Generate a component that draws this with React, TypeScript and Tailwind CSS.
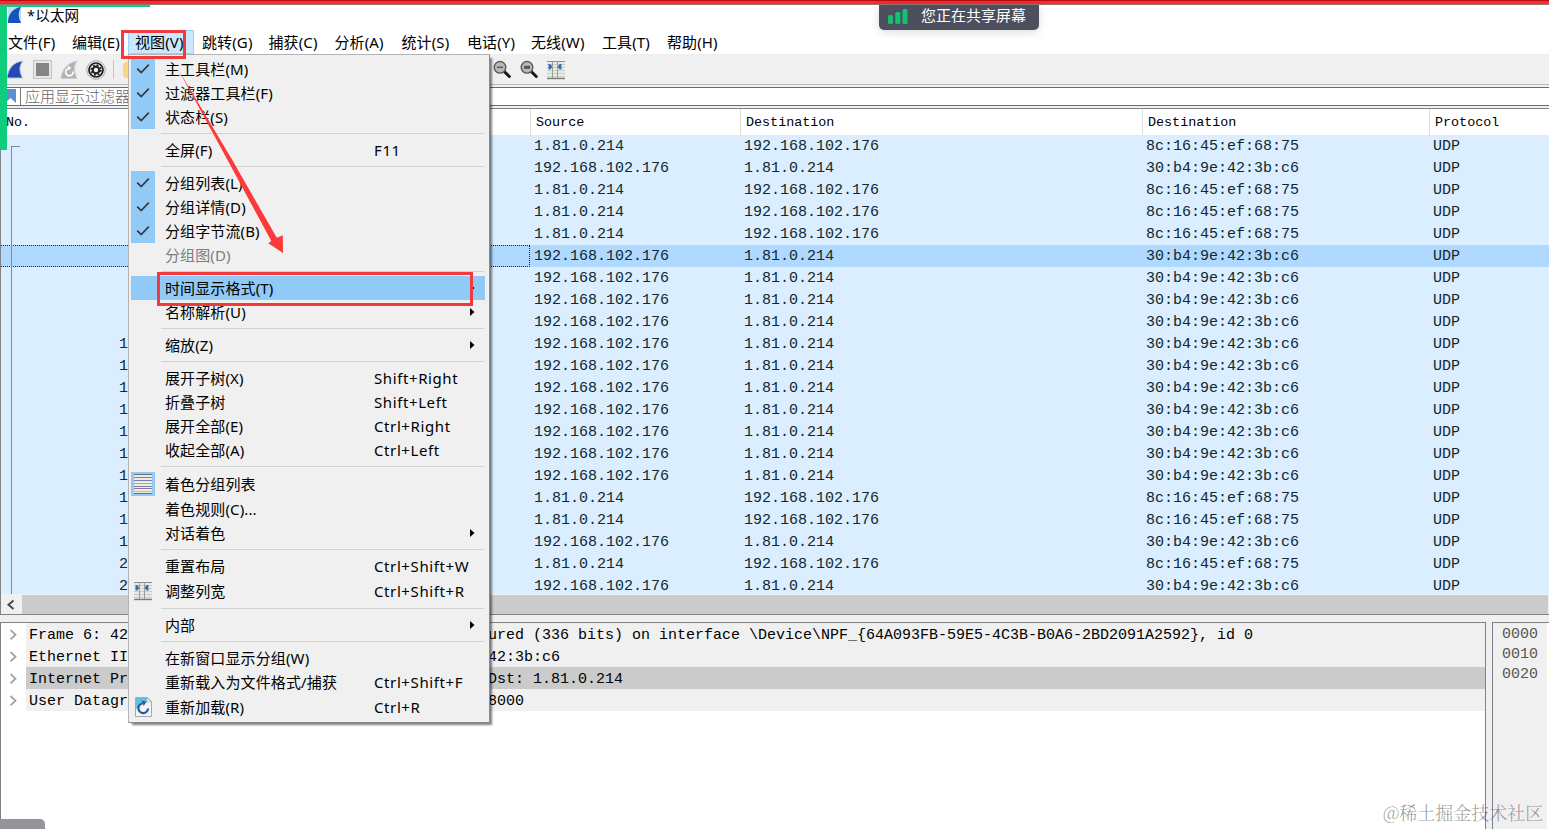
import React from "react";

const UI = "font-['Noto_Sans','Noto_Sans_CJK_SC',sans-serif]";
const MONO = "font-['Liberation_Mono','Noto_Sans_CJK_SC',monospace]";

const A = "1.81.0.214";
const B = "192.168.102.176";
const OUT = [A, B, "8c:16:45:ef:68:75"];
const IN = [B, A, "30:b4:9e:42:3b:c6"];
const directions = "oioooiiiiiiiiiiiooioi";
const packets = directions.split("").map((d) => (d === "o" ? OUT : IN));

const menus = [
  { label: "文件(F)", w: "w-[64px]" },
  { label: "编辑(E)", w: "w-[63px]" },
  { label: "视图(V)", w: "w-[67px]" },
  { label: "跳转(G)", w: "w-[66.5px]" },
  { label: "捕获(C)", w: "w-[66px]" },
  { label: "分析(A)", w: "w-[67px]" },
  { label: "统计(S)", w: "w-[65.5px]" },
  { label: "电话(Y)", w: "w-[64px]" },
  { label: "无线(W)", w: "w-[71px]" },
  { label: "工具(T)", w: "w-[65px]" },
  { label: "帮助(H)", w: "w-[65px]" },
];

type Item = {
  label: string;
  keys?: string;
  icon?: "check" | "color" | "columns" | "reload";
  sub?: boolean;
  disabled?: boolean;
  active?: boolean;
  h?: string;
};

const groups: Item[][] = [
  [
    { label: "主工具栏(M)", icon: "check" },
    { label: "过滤器工具栏(F)", icon: "check" },
    { label: "状态栏(S)", icon: "check" },
  ],
  [{ label: "全屏(F)", keys: "F11" }],
  [
    { label: "分组列表(L)", icon: "check" },
    { label: "分组详情(D)", icon: "check" },
    { label: "分组字节流(B)", icon: "check" },
    { label: "分组图(D)", disabled: true },
  ],
  [
    { label: "时间显示格式(T)", sub: true, active: true },
    { label: "名称解析(U)", sub: true },
  ],
  [{ label: "缩放(Z)", sub: true }],
  [
    { label: "展开子树(X)", keys: "Shift+Right" },
    { label: "折叠子树", keys: "Shift+Left" },
    { label: "展开全部(E)", keys: "Ctrl+Right" },
    { label: "收起全部(A)", keys: "Ctrl+Left" },
  ],
  [
    { label: "着色分组列表", icon: "color", h: "h-[26px]" },
    { label: "着色规则(C)..." },
    { label: "对话着色", sub: true },
  ],
  [
    { label: "重置布局", keys: "Ctrl+Shift+W" },
    { label: "调整列宽", keys: "Ctrl+Shift+R", icon: "columns", h: "h-[26px]" },
  ],
  [{ label: "内部", sub: true }],
  [
    { label: "在新窗口显示分组(W)" },
    { label: "重新载入为文件格式/捕获", keys: "Ctrl+Shift+F" },
    { label: "重新加载(R)", keys: "Ctrl+R", icon: "reload", h: "h-[26px]" },
  ],
];

// Each line is split where the open menu covers it.
const details = [
  ["Frame 6: 42", "ured (336 bits) on interface \\Device\\NPF_{64A093FB-59E5-4C3B-B0A6-2BD2091A2592}, id 0"],
  ["Ethernet II", "42:3b:c6"],
  ["Internet Pr", "Dst: 1.81.0.214"],
  ["User Datagr", "8000"],
];

function ColumnsIcon() {
  return (
    <svg width="18" height="20" viewBox="0 0 18 20" className="shrink-0">
      <rect x="0" y="1" width="18" height="18" fill="#e9ebe4" />
      <path d="M0 4.5h18M0 7.5h18M0 10.5h18M0 13.5h18M0 16.5h18" stroke="#c9cdc5" />
      <path d="M0 1.5h18" stroke="#8c8e8a" />
      <path d="M0 18.5h18" stroke="#777975" strokeWidth="1.4" />
      <path d="M5.5 1v17M10.5 1v17" stroke="#9a9d98" />
      <path d="M1.5 4v5.5h1.8L5 7.5V6L3.3 4zM14.5 4v5.5h-1.8L11 7.5V6l1.7-2z" fill="#3a6fae" />
    </svg>
  );
}

function ZoomIcon({ lines }: { lines: number }) {
  return (
    <svg width="19" height="19" viewBox="0 0 19 19">
      <path d="M11.5 11.7l4.8 4.8" stroke="#181818" strokeWidth="3" strokeLinecap="round" />
      <circle cx="7" cy="7.3" r="5.8" fill="#b9bab8" stroke="#5a5c5a" strokeWidth="1.4" />
      {lines === 1 ? (
        <path d="M4 7.3h6" stroke="#555" strokeWidth="1.5" />
      ) : (
        <path d="M4 7.3h6" stroke="#555" strokeWidth="3" />
      )}
    </svg>
  );
}

function ItemIcon({ kind }: { kind?: Item["icon"] }) {
  if (kind === "check")
    return (
      <div className="flex h-full w-6 items-center justify-center bg-[#91c9f7]">
        <svg width="14" height="12" viewBox="0 0 14 12">
          <path d="M1.2 5.6l4 4L12.8 1.6" fill="none" stroke="#2c3a48" strokeWidth="1.6" />
        </svg>
      </div>
    );
  if (kind === "color")
    return (
      <div className="flex h-6 w-6 items-center justify-center bg-[#91c9f7]">
        <svg width="18" height="20" viewBox="0 0 18 20">
          <rect width="18" height="20" fill="#eceee6" />
          <path d="M0 .5h18M0 19.5h18" stroke="#6b7074" />
          <path d="M0 3.5h18" stroke="#e0605c" />
          <path d="M0 6.5h18" stroke="#7181ae" />
          <path d="M0 9.5h18" stroke="#78cf47" />
          <path d="M0 12.5h18" stroke="#7181ae" />
          <path d="M0 14.5h18" stroke="#9b7096" />
          <path d="M0 17.5h18" stroke="#e4c04c" />
        </svg>
      </div>
    );
  if (kind === "columns")
    return (
      <div className="flex w-6 justify-center">
        <ColumnsIcon />
      </div>
    );
  if (kind === "reload")
    return (
      <div className="flex w-6 justify-center">
        <svg width="17" height="20" viewBox="0 0 17 20">
          <path d="M.5 .5h12l4 4v15H.5z" fill="#f1f3f4" stroke="#a6aaac" />
          <path d="M1 1h11l1 4-5 1-7 6z" fill="#62bfe6" />
          <path d="M12 1l4 4h-4z" fill="#fff" stroke="#a6aaac" strokeWidth=".6" />
          <path d="M13 11.5a4.8 4.8 0 1 1-5.5-5" fill="none" stroke="#2d5590" strokeWidth="2.2" />
          <path d="M6.5 3.6l4.8 1.2-2.6 4.2z" fill="#2d5590" />
        </svg>
      </div>
    );
  return <div className="w-6" />;
}

function MenuItem({ item }: { item: Item }) {
  return (
    <div
      className={`mr-[2px] flex items-center ${item.h ?? "h-6"} ${item.active ? "bg-[#91c9f7]" : ""} ${
        item.disabled ? "text-[#7d7d7d]" : "text-black"
      }`}
    >
      <ItemIcon kind={item.icon} />
      <span className="ml-[10px] w-[209px] whitespace-nowrap tracking-[0.12px]">{item.label}</span>
      <span className="w-[96px] shrink-0 whitespace-nowrap tracking-[0.6px]">{item.keys}</span>
      {item.sub && (
        <svg width="5" height="8" viewBox="0 0 5 8" className="shrink-0">
          <path d="M0 0l4.5 4L0 8z" fill="#000" />
        </svg>
      )}
    </div>
  );
}

function ViewMenu() {
  return (
    <div
      className={`absolute left-[128px] top-[54px] h-[669px] w-[362px] border border-[#b4b4b4] border-r-[#8c8c8c] border-b-[#8c8c8c] bg-[#f0f0f0] px-[2px] pt-[2px] text-[15px] leading-6 shadow-[3px_3px_2px_-1px_rgba(0,0,0,0.5)] ${UI}`}
    >
      {groups.map((g, i) => (
        <React.Fragment key={i}>
          {i > 0 && <div className="mb-[4px] ml-[30px] mr-[3px] mt-[4px] h-px bg-[#d2d2d2]" />}
          {g.map((item) => (
            <MenuItem key={item.label} item={item} />
          ))}
        </React.Fragment>
      ))}
    </div>
  );
}

function Toolbar() {
  return (
    <div className="flex h-[30px] shrink-0 items-center border-b border-[#b9b9b9] bg-[#f0f0f0] pl-[7px]">
      <svg width="17" height="19" viewBox="0 0 17 19">
        <path d="M0 18C1 9 6 2 16 1c-4 5-4 10-.5 17z" fill="#2448b8" stroke="#b9c1d4" />
      </svg>
      <svg width="19" height="19" viewBox="0 0 19 19" className="ml-[9px]">
        <rect x=".5" y=".5" width="18" height="18" fill="#e6e6e6" stroke="#c4c4c4" />
        <rect x="3" y="3" width="13" height="13" fill="#858585" />
      </svg>
      <svg width="19" height="20" viewBox="0 0 19 20" className="ml-[8px]">
        <path d="M1 18.5C2 10 7 3 17 1c-4 5-3 11 0 17.5z" fill="#b3b3b3" stroke="#c9c9c9" />
        <path d="M13 11.5a3.7 3.7 0 1 1-4.6-3" fill="none" stroke="#fff" strokeWidth="1.8" />
        <path d="M7.5 5.5l3.8 2.3-3 2.8z" fill="#fff" />
      </svg>
      <svg width="20" height="20" viewBox="0 0 20 20" className="ml-[7px]">
        <circle cx="10" cy="10" r="9.3" fill="#e8e8e8" stroke="#aaa" />
        <circle cx="10" cy="10" r="7" fill="#eee" stroke="#222" strokeWidth="1.7" />
        <circle cx="10" cy="10" r="3.3" fill="none" stroke="#222" strokeWidth="2.2" />
        <circle cx="10" cy="10" r="4.9" fill="none" stroke="#222" strokeWidth="1.6" strokeDasharray="1.9 1.95" />
      </svg>
      <div className="ml-[7px] h-[19px] w-px bg-[#c6c6c6]" />
      <div className="ml-[9px] h-4 w-5 rounded-sm bg-[#f8d780]" />
      <div className="ml-[350px] flex items-center gap-2">
        <ZoomIcon lines={1} />
        <ZoomIcon lines={2} />
        <ColumnsIcon />
      </div>
    </div>
  );
}

function PacketList() {
  const grid = "grid grid-cols-[530px_210px_402px_287px_1fr]";
  return (
    <div className="relative flex h-[507px] shrink-0 flex-col border-b border-l border-t border-[#7f8387] bg-white">
      <div className={`${grid} h-[26px] shrink-0 text-[13.4px] leading-[28px] ${MONO}`}>
        <div className="border-r border-[#dedede] pl-[5px]">No.</div>
        {["Source", "Destination", "Destination", "Protocol"].map((h, i) => (
          <div key={i} className={`pl-[5px] ${i < 3 ? "border-r border-[#dedede]" : ""}`}>
            {h}
          </div>
        ))}
      </div>
      <div className="h-[459px] shrink-0 overflow-hidden bg-[#daeeff]">
        {packets.map((p, i) => (
          <div
            key={i}
            className={`${grid} h-[22px] text-[15px] leading-[24px] text-[#12272e] ${MONO} ${i === 5 ? "bg-[#afd9ff]" : ""}`}
          >
            <div
              className={`pl-[100px] ${i === 5 ? "mr-px border border-l-0 border-dotted border-[#12272e] leading-[20px]" : ""}`}
            >
              <div className="w-9 text-right">{i + 1}</div>
            </div>
            {[...p, "UDP"].map((c, j) => (
              <div key={j} className="h-[22px] pl-[3px]">
                {c}
              </div>
            ))}
          </div>
        ))}
      </div>
      <div className="flex h-[20px] items-center bg-[#f0f0f0]">
        <svg width="21" height="19" viewBox="0 0 21 19">
          <path d="M12.5 5.5l-5 4.3 5 4.3" fill="none" stroke="#4a4a4a" strokeWidth="2" />
        </svg>
        <div className="mr-px h-[19px] flex-1 bg-[#cbcbcb]" />
      </div>
      <div className="absolute left-[10px] top-[37px] h-[448px] w-[9px] border-l border-t border-[#7d8c98]" />
    </div>
  );
}

function Panes() {
  return (
    <div className="flex min-h-0 flex-1 gap-[6px] bg-[#f0f0f0] pt-[6px]">
      <div className="w-[1486px] border border-b-0 border-[#7f8387] bg-white">
        {details.map(([start, end], i) => (
          <div key={i} className="flex h-[22px] items-center">
            <svg width="25" height="22" viewBox="0 0 25 22" className="shrink-0">
              <path d="M9.5 7l5 4.7-5 4.7" fill="none" stroke="#a3a3a3" strokeWidth="1.8" />
            </svg>
            <div
              className={`flex h-[22px] flex-1 whitespace-pre pl-[3px] text-[15px] leading-[25px] ${MONO} ${
                i === 2 ? "bg-[#cbcbcb]" : "bg-[#f0f0f0]"
              }`}
            >
              <span className="w-[459px]">{start}</span>
              <span>{end}</span>
            </div>
          </div>
        ))}
      </div>
      <div className="flex-1 border-l border-t border-[#7f8387] bg-white pr-[2px]">
        <div className={`h-full bg-[#f0f0f0] pl-[9px] pt-[2px] text-[15px] leading-5 text-[#555] ${MONO}`}>
          <div>0000</div>
          <div>0010</div>
          <div>0020</div>
        </div>
      </div>
    </div>
  );
}

export default function App() {
  return (
    <div className={`relative flex h-[829px] w-[1549px] flex-col overflow-hidden bg-white text-black ${UI}`}>
      <div className="h-[5px] shrink-0 border-b border-t border-b-[#8f7a78] border-t-[#b90d10] bg-[#fb2a2e]" />
      <div className="flex h-[25px] shrink-0 items-start pl-[8px] text-[14.5px] leading-5">
        <svg width="13" height="17" viewBox="0 0 13 17" className="mt-px">
          <rect width="13" height="17" fill="#c4dcf3" />
          <path d="M0 17C0 8 5 2 13 1c-3 5-3 10 0 16z" fill="#1553be" />
        </svg>
        <span className="ml-[6px] tracking-[0.2px]">*以太网</span>
      </div>
      <div className="flex h-[25px] shrink-0 items-center border-b border-[#eeeeee] pl-[8px] text-[15px]">
        {menus.map((m) => (
          <div key={m.label} className={`${m.w} relative whitespace-nowrap tracking-[0.12px]`}>
            {m.label === "视图(V)" && (
              <div className="absolute -left-[7px] -top-px h-[24px] w-[66px] border border-[#99d1ff] bg-[#cce8ff]" />
            )}
            <span className="relative">{m.label}</span>
          </div>
        ))}
      </div>
      <Toolbar />
      <div className="flex h-[23px] shrink-0 flex-col bg-[#f0f0f0] pt-[2px]">
        <div className="flex h-[19px] items-center border-b border-t border-[#6b6b6b] bg-white">
          <div className="flex w-[21px] justify-center self-stretch border-r border-[#777]">
            <svg width="14" height="16" viewBox="0 0 14 16">
              <path d="M2 1h11v14l-5.5-5L2 15z" fill="#5b8fd0" />
            </svg>
          </div>
          <span className="ml-[4px] text-[15px] font-light leading-[17px] text-[#666]">应用显示过滤器</span>
        </div>
      </div>
      <PacketList />
      <div className="h-px shrink-0 bg-[#f0f0f0]" />
      <Panes />

      <ViewMenu />

      <div className="absolute left-0 top-[5px] h-[145px] w-[7px] bg-[#10cd7b]" />
      <div className="absolute left-0 top-[5px] h-[2px] w-[150px] bg-[#10cd7b]" />
      <div className="absolute left-[879px] top-[5px] flex h-[25px] w-[160px] items-start rounded-b-[5px] bg-[#4d4f5e] pl-[9px] shadow-[0_2px_10px_rgba(0,0,0,0.15)]">
        <svg width="20" height="17" viewBox="0 0 20 17" className="mt-[3px]">
          <rect x="0" y="7" width="5" height="9" rx="1.5" fill="#12c26e" />
          <rect x="7.3" y="4" width="5" height="12" rx="1.5" fill="#12c26e" />
          <rect x="14.5" y="1" width="5" height="15" rx="1.5" fill="#12c26e" />
        </svg>
        <span className="ml-[13px] whitespace-nowrap text-[15px] leading-5 text-white">您正在共享屏幕</span>
      </div>

      <div className="absolute left-[121px] top-[30px] h-[29px] w-[65px] border-[3px] border-[#f03a3e]" />
      <div className="absolute left-[157px] top-[272px] h-[34px] w-[316px] border-[3px] border-[#f03a3e]" />
      <svg className="absolute left-[170px] top-[60px]" width="120" height="200" viewBox="170 60 120 200">
        <path d="M178 69L232.3 160 276.8 237.7 282.8 235.2 283 253 268.2 243.3 271.3 241 227.5 160z" fill="#fc3a3a" />
      </svg>

      <div className="absolute bottom-0 left-0 h-[10px] w-[45px] rounded-tr-[5px] bg-[#939598]" />
      <div className="absolute left-[1383px] top-[799px] whitespace-nowrap font-['Noto_Serif_CJK_SC','Noto_Sans_CJK_SC',sans-serif] text-[18px] font-light leading-[26px] text-[#555]/60">
        @稀土掘金技术社区
      </div>
    </div>
  );
}
